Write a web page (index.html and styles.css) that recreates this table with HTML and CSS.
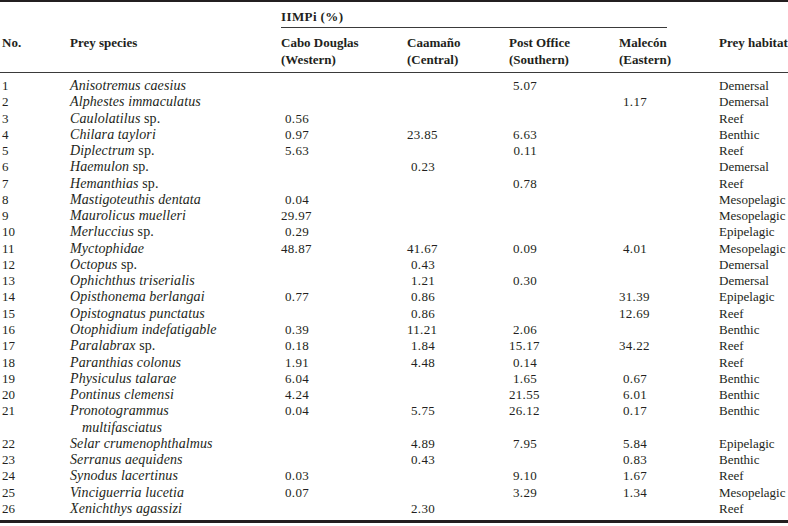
FILE: index.html
```html
<!DOCTYPE html>
<html lang="en">
<head>
<meta charset="utf-8">
<title>IIMPi prey table</title>
<link rel="stylesheet" href="styles.css">
</head>
<body>
<table class="prey">
  <colgroup>
    <col class="c-no"><col class="c-sp"><col class="c-v1"><col class="c-v2"><col class="c-v3"><col class="c-v4"><col class="c-hab">
  </colgroup>
  <thead>
    <tr class="h1">
      <th></th><th></th>
      <th colspan="4" class="group"><div class="group-label">IIMPi (%)</div></th>
      <th></th>
    </tr>
    <tr class="h2">
      <th class="no">No.</th>
      <th>Prey species</th>
      <th>Cabo Douglas<br>(Western)</th>
      <th>Caamaño<br>(Central)</th>
      <th>Post Office<br>(Southern)</th>
      <th>Malecón<br>(Eastern)</th>
      <th>Prey habitat</th>
    </tr>
  </thead>
  <tbody>
    <tr><td class="no">1</td><td><i>Anisotremus caesius</i></td><td></td><td></td><td><span class="v">5.07</span></td><td></td><td>Demersal</td></tr>
    <tr><td class="no">2</td><td><i>Alphestes immaculatus</i></td><td></td><td></td><td></td><td><span class="v">1.17</span></td><td>Demersal</td></tr>
    <tr><td class="no">3</td><td><i>Caulolatilus</i> sp.</td><td><span class="v">0.56</span></td><td></td><td></td><td></td><td>Reef</td></tr>
    <tr><td class="no">4</td><td><i>Chilara taylori</i></td><td><span class="v">0.97</span></td><td><span class="v">23.85</span></td><td><span class="v">6.63</span></td><td></td><td>Benthic</td></tr>
    <tr><td class="no">5</td><td><i>Diplectrum</i> sp.</td><td><span class="v">5.63</span></td><td></td><td><span class="v">0.11</span></td><td></td><td>Reef</td></tr>
    <tr><td class="no">6</td><td><i>Haemulon</i> sp.</td><td></td><td><span class="v">0.23</span></td><td></td><td></td><td>Demersal</td></tr>
    <tr><td class="no">7</td><td><i>Hemanthias</i> sp.</td><td></td><td></td><td><span class="v">0.78</span></td><td></td><td>Reef</td></tr>
    <tr><td class="no">8</td><td><i>Mastigoteuthis dentata</i></td><td><span class="v">0.04</span></td><td></td><td></td><td></td><td>Mesopelagic</td></tr>
    <tr><td class="no">9</td><td><i>Maurolicus muelleri</i></td><td><span class="v">29.97</span></td><td></td><td></td><td></td><td>Mesopelagic</td></tr>
    <tr><td class="no">10</td><td><i>Merluccius</i> sp.</td><td><span class="v">0.29</span></td><td></td><td></td><td></td><td>Epipelagic</td></tr>
    <tr><td class="no">11</td><td><i>Myctophidae</i></td><td><span class="v">48.87</span></td><td><span class="v">41.67</span></td><td><span class="v">0.09</span></td><td><span class="v">4.01</span></td><td>Mesopelagic</td></tr>
    <tr><td class="no">12</td><td><i>Octopus</i> sp.</td><td></td><td><span class="v">0.43</span></td><td></td><td></td><td>Demersal</td></tr>
    <tr><td class="no">13</td><td><i>Ophichthus triserialis</i></td><td></td><td><span class="v">1.21</span></td><td><span class="v">0.30</span></td><td></td><td>Demersal</td></tr>
    <tr><td class="no">14</td><td><i>Opisthonema berlangai</i></td><td><span class="v">0.77</span></td><td><span class="v">0.86</span></td><td></td><td><span class="v">31.39</span></td><td>Epipelagic</td></tr>
    <tr><td class="no">15</td><td><i>Opistognatus punctatus</i></td><td></td><td><span class="v">0.86</span></td><td></td><td><span class="v">12.69</span></td><td>Reef</td></tr>
    <tr><td class="no">16</td><td><i>Otophidium indefatigable</i></td><td><span class="v">0.39</span></td><td><span class="v">11.21</span></td><td><span class="v">2.06</span></td><td></td><td>Benthic</td></tr>
    <tr><td class="no">17</td><td><i>Paralabrax</i> sp.</td><td><span class="v">0.18</span></td><td><span class="v">1.84</span></td><td><span class="v">15.17</span></td><td><span class="v">34.22</span></td><td>Reef</td></tr>
    <tr><td class="no">18</td><td><i>Paranthias colonus</i></td><td><span class="v">1.91</span></td><td><span class="v">4.48</span></td><td><span class="v">0.14</span></td><td></td><td>Reef</td></tr>
    <tr><td class="no">19</td><td><i>Physiculus talarae</i></td><td><span class="v">6.04</span></td><td></td><td><span class="v">1.65</span></td><td><span class="v">0.67</span></td><td>Benthic</td></tr>
    <tr><td class="no">20</td><td><i>Pontinus clemensi</i></td><td><span class="v">4.24</span></td><td></td><td><span class="v">21.55</span></td><td><span class="v">6.01</span></td><td>Benthic</td></tr>
    <tr><td class="no">21</td><td><span class="hang"><i>Pronotogrammus<br>multifasciatus</i></span></td><td><span class="v">0.04</span></td><td><span class="v">5.75</span></td><td><span class="v">26.12</span></td><td><span class="v">0.17</span></td><td>Benthic</td></tr>
    <tr><td class="no">22</td><td><i>Selar crumenophthalmus</i></td><td></td><td><span class="v">4.89</span></td><td><span class="v">7.95</span></td><td><span class="v">5.84</span></td><td>Epipelagic</td></tr>
    <tr><td class="no">23</td><td><i>Serranus aequidens</i></td><td></td><td><span class="v">0.43</span></td><td></td><td><span class="v">0.83</span></td><td>Benthic</td></tr>
    <tr><td class="no">24</td><td><i>Synodus lacertinus</i></td><td><span class="v">0.03</span></td><td></td><td><span class="v">9.10</span></td><td><span class="v">1.67</span></td><td>Reef</td></tr>
    <tr><td class="no">25</td><td><i>Vinciguerria lucetia</i></td><td><span class="v">0.07</span></td><td></td><td><span class="v">3.29</span></td><td><span class="v">1.34</span></td><td>Mesopelagic</td></tr>
    <tr><td class="no">26</td><td><i>Xenichthys agassizi</i></td><td></td><td><span class="v">2.30</span></td><td></td><td></td><td>Reef</td></tr>
  </tbody>
</table>
</body>
</html>
```

FILE: styles.css
```css
html, body {
  margin: 0;
  padding: 0;
  background: #ffffff;
}

body {
  font-family: "Liberation Serif", "Times New Roman", serif;
  font-size: 13px;
  color: #231f20;
}

.prey {
  width: 788px;
  table-layout: fixed;
  border-collapse: collapse;
  border-top: 2px solid #231f20;
  border-bottom: 3px solid #231f20;
}

.c-no { width: 70px; }
.c-sp { width: 211px; }
.c-v1 { width: 126px; }
.c-v2 { width: 102px; }
.c-v3 { width: 110px; }
.c-v4 { width: 100px; }
.c-hab { width: 69px; }

.prey th,
.prey td {
  padding: 0;
  text-align: left;
  vertical-align: top;
  white-space: nowrap;
}

.prey th {
  font-weight: bold;
  line-height: 17px;
}

.h1 th {
  padding-top: 6px;
  padding-bottom: 2px;
}

.group-label {
  width: 386px;
  border-bottom: 1px solid #3a3a3a;
  padding-bottom: 2px;
  letter-spacing: 0.4px;
}

.h1 th.group {
  padding-bottom: 0;
}

.h2 th {
  padding-top: 6px;
  padding-bottom: 4px;
  border-bottom: 1px solid #3a3a3a;
}

.prey .no {
  padding-left: 2px;
}

.prey td {
  line-height: 16.27px;
}

.prey tbody td:nth-child(2) {
  font-size: 14px;
  letter-spacing: 0.1px;
}

.prey tbody tr:first-child td {
  padding-top: 5px;
}

.prey tbody tr:last-child td {
  padding-bottom: 3px;
}

.v {
  display: inline-block;
  width: 28px;
  text-align: right;
  letter-spacing: 0.3px;
}

.hang {
  display: block;
  padding-left: 12px;
  text-indent: -12px;
}
```
